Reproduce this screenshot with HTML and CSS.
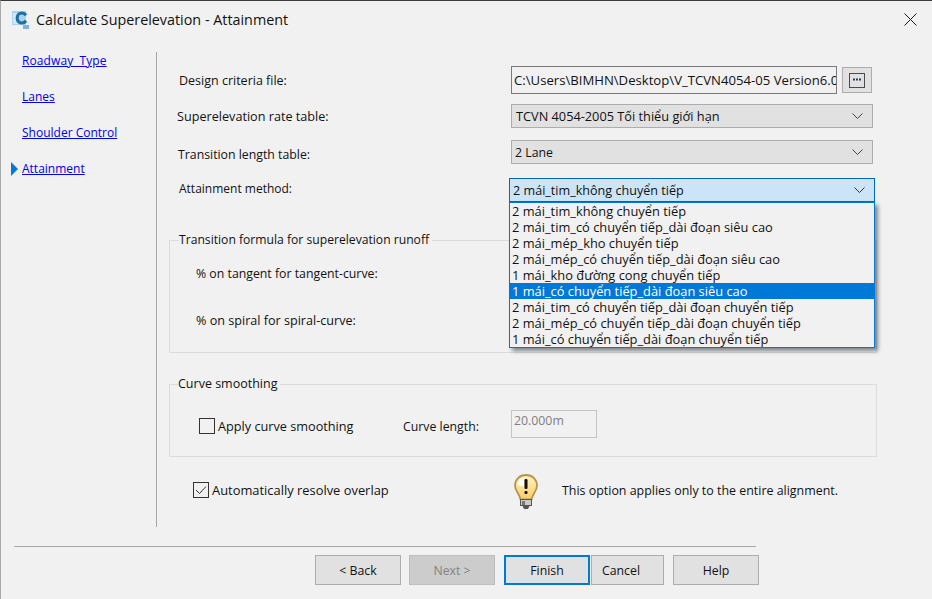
FILE: index.html
```html
<!DOCTYPE html>
<html lang="vi">
<head>
<meta charset="utf-8">
<title>Calculate Superelevation - Attainment</title>
<link rel="stylesheet" href="styles.css">
</head>
<body>
<div class="dialog">
  <header class="titlebar">
    <svg class="app-icon" width="18" height="20" viewBox="0 0 18 20">
      <rect x="0" y="1" width="14" height="14" fill="#a9d3ee"/>
      <rect x="1" y="3" width="6" height="11" fill="#cfe6f6"/>
      <path d="M14 5.200C13 3.800 11.600 3 10 3 7.200 3 5.200 5.100 5.200 8s2 5 4.800 5c1.600 0 3-.8 4-2.200" fill="none" stroke="#1d6fa5" stroke-width="3.200"/>
      <rect x="11" y="15" width="6" height="4" fill="#7fb3d6"/>
    </svg>
    <h1 class="title">Calculate Superelevation - Attainment</h1>
    <svg class="close" width="13" height="13" viewBox="0 0 13 13">
      <path d="M.5.5l12 12M12.500.5l-12 12" stroke="#1a1a1a" stroke-width="1" fill="none"/>
    </svg>
  </header>

  <main class="body">
    <nav class="nav">
      <a class="nav-link nav-link-wide" href="#">Roadway Type</a>
      <a class="nav-link" href="#">Lanes</a>
      <a class="nav-link" href="#">Shoulder Control</a>
      <a class="nav-link nav-current" href="#">Attainment</a>
    </nav>

    <section class="content">
      <div class="row row-file">
        <label class="label label-a label-design">Design criteria file:</label>
        <div class="path-input">C:\Users\BIMHN\Desktop\V_TCVN4054-05 Version6.0</div>
        <button class="browse" type="button">
          <svg width="16" height="15" viewBox="0 0 16 15">
            <rect x=".5" y=".5" width="15" height="14" fill="none" stroke="#4a4a4a"/>
            <path d="M4 6.500h2M7 6.500h2M10 6.500h2" stroke="#1c3f6e" stroke-width="2"/>
          </svg>
        </button>
      </div>
      <div class="row row-rate">
        <label class="label label-b">Superelevation rate table:</label>
        <div class="select">
          <span class="select-text select-text-wide">TCVN 4054-2005 Tối thiểu giới hạn</span>
          <svg class="chevron" width="11" height="6" viewBox="0 0 11 6"><path d="M.5.500l5 5 5-5" fill="none" stroke="#444"/></svg>
        </div>
      </div>
      <div class="row row-length">
        <label class="label label-c">Transition length table:</label>
        <div class="select">
          <span class="select-text">2 Lane</span>
          <svg class="chevron" width="11" height="6" viewBox="0 0 11 6"><path d="M.5.500l5 5 5-5" fill="none" stroke="#444"/></svg>
        </div>
      </div>
      <div class="row row-method">
        <label class="label label-a label-method">Attainment method:</label>
        <div class="select select-open">
          <span class="select-text">2 mái_tim_không chuyển tiếp</span>
          <svg class="chevron" width="11" height="6" viewBox="0 0 11 6"><path d="M.5.500l5 5 5-5" fill="none" stroke="#333"/></svg>
          <ul class="dropdown">
            <li class="option">2 mái_tim_không chuyển tiếp</li>
            <li class="option">2 mái_tim_có chuyển tiếp_dài đoạn siêu cao</li>
            <li class="option">2 mái_mép_kho chuyển tiếp</li>
            <li class="option">2 mái_mép_có chuyển tiếp_dài đoạn siêu cao</li>
            <li class="option">1 mái_kho đường cong chuyển tiếp</li>
            <li class="option option-active">1 mái_có chuyển tiếp_dài đoạn siêu cao</li>
            <li class="option">2 mái_tim_có chuyển tiếp_dài đoạn chuyển tiếp</li>
            <li class="option">2 mái_mép_có chuyển tiếp_dài đoạn chuyển tiếp</li>
            <li class="option">1 mái_có chuyển tiếp_dài đoạn chuyển tiếp</li>
          </ul>
        </div>
      </div>

      <fieldset class="group group-formula">
        <legend class="legend">Transition formula for superelevation runoff</legend>
        <p class="formula-line">% on tangent for tangent-curve:</p>
        <p class="formula-line formula-second">% on spiral for spiral-curve:</p>
      </fieldset>

      <fieldset class="group group-curve">
        <legend class="legend legend-curve">Curve smoothing</legend>
        <div class="curve-row">
          <span class="check check-empty"></span>
          <span class="check-label check-label-apply">Apply curve smoothing</span>
          <span class="curve-length">Curve length:</span>
          <div class="length-input">20.000m</div>
        </div>
      </fieldset>

      <div class="row row-overlap">
        <span class="check check-on">
          <svg width="12" height="10" viewBox="0 0 12 10"><path d="M1 5l3.500 3.500L11 1.500" fill="none" stroke="#333" stroke-width="1"/></svg>
        </span>
        <span class="check-label check-label-overlap">Automatically resolve overlap</span>
        <svg class="bulb" width="26" height="38" viewBox="0 0 26 38">
          <defs>
            <linearGradient id="glass" x1="0" y1="0" x2="0" y2="1">
              <stop offset="0" stop-color="#fff3c4"/>
              <stop offset="1" stop-color="#f9cd66"/>
            </linearGradient>
          </defs>
          <path d="M13 2C6.500 2 2 6.700 2 12.500c0 5.500 4.500 8 5.500 14h11c1-6 5.500-8.500 5.500-14C24 6.700 19.500 2 13 2z" fill="url(#glass)" stroke="#b9944a" stroke-width="1.800"/>
          <path d="M4.500 12C4.500 7.500 8 4.500 11 4.200v9.300z" fill="#fffdf4"/>
          <rect x="11.500" y="6" width="3" height="10" rx="1.300" fill="#111"/>
          <rect x="11.500" y="18" width="3" height="3" rx="1" fill="#111"/>
          <rect x="7.500" y="26.500" width="11" height="6" fill="#c9c9c9" stroke="#555"/>
          <rect x="9" y="28" width="3" height="4" fill="#777"/>
          <path d="M9.500 33h7l-1.500 3h-4z" fill="#555"/>
        </svg>
        <span class="note">This option applies only to the entire alignment.</span>
      </div>
    </section>
  </main>

  <footer class="footer">
    <div class="rule"></div>
    <div class="buttons">
      <button class="btn" type="button">&lt; Back</button>
      <button class="btn btn-disabled" type="button">Next &gt;</button>
      <button class="btn btn-default" type="button">Finish</button>
      <button class="btn btn-cancel" type="button">Cancel</button>
      <button class="btn btn-help" type="button">Help</button>
    </div>
  </footer>
</div>
</body>
</html>
```

FILE: styles.css
```css
* { box-sizing: border-box; }
html, body { margin: 0; padding: 0; }
body {
  width: 932px;
  height: 599px;
  overflow: hidden;
  font-family: "Open Sans", "Noto Sans", sans-serif;
  font-size: 12.3px;
  color: #111;
  background: #f1f1f1;
}
.dialog {
  width: 932px;
  height: 599px;
  display: flex;
  flex-direction: column;
  background: #f1f1f1;
  border-top: 1px solid #3c3c3c;
  border-left: 1px solid #a8a8a8;
}
.titlebar {
  height: 39px;
  display: flex;
  align-items: center;
  padding: 0 15px 2px 11px;
  flex: none;
}
.app-icon { flex: none; }
.title {
  flex: 1;
  margin: 0 0 0 6px;
  font-size: 14.35px;
  font-weight: 400;
  color: #111;
}
.close { flex: none; }
.body {
  flex: none;
  height: 475px;
  margin-top: 12px;
  display: flex;
}
.nav {
  width: 156px;
  flex: none;
  border-right: 1px solid #a8a8a8;
  padding: 0 0 0 21px;
  display: flex;
  flex-direction: column;
  align-items: flex-start;
  font-size: 12px;
}
.nav-link {
  height: 18px;
  line-height: 18px;
  margin-bottom: 18px;
  color: #0000ee;
  position: relative;
}
.nav-link-wide { word-spacing: 3px; letter-spacing: .1px; }
.nav-current::before {
  content: "";
  position: absolute;
  left: -11px;
  top: 2px;
  border-left: 7px solid #0a78d2;
  border-top: 7px solid transparent;
  border-bottom: 7px solid transparent;
}
.content {
  flex: 1;
  padding: 14px 0 0 12px;
  min-width: 0;
}
.row {
  display: flex;
  align-items: center;
  position: relative;
}
.label { display: block; flex: none; }
.label-a { width: 342px; padding-left: 10px; }
.label-b { width: 342px; padding-left: 8px; font-size: 12.65px; }
.label-c { width: 342px; padding: 4px 0 0 9px; }
.label-design { font-size: 12.5px; }
.row-file { height: 28px; }
.row-rate { height: 24px; margin-top: 10px; }
.row-length { height: 24px; margin-top: 12px; }
.row-method { height: 24px; margin-top: 14px; }
.label-method { width: 340px; padding-bottom: 4px; font-size: 12px; }
.path-input {
  width: 326px;
  height: 28px;
  border: 1px solid #7a7a7a;
  line-height: 26px;
  padding-left: 2px;
  background: #f1f1f1;
  overflow: hidden;
  white-space: nowrap;
  font-size: 13.15px;
}
.browse {
  width: 30px;
  height: 26px;
  margin-left: 5px;
  padding: 0;
  border: 1px solid #adadad;
  background: #e1e1e1;
  display: flex;
  align-items: center;
  justify-content: center;
}
.select {
  width: 362px;
  height: 24px;
  border: 1px solid #adadad;
  background: #e1e1e1;
  display: flex;
  align-items: center;
  justify-content: space-between;
  padding: 0 9px 0 3px;
  position: relative;
}
.select-text-wide { padding-left: 1px; font-size: 12.75px; }
.select-open {
  width: 366px;
  border: 1px solid #0067c0;
  background: #cce4f7;
  padding-left: 3px;
  padding-right: 9px;
  font-size: 12.6px;
}
.dropdown {
  position: absolute;
  left: -1px;
  top: 23px;
  width: 366px;
  height: 146px;
  margin: 0;
  padding: 0;
  list-style: none;
  background: #f1f1f1;
  border: 1px solid #0078d7;
  box-shadow: 3px 3px 4px rgba(0, 0, 0, .45);
  z-index: 2;
  font-size: 12.85px;
}
.option {
  height: 16px;
  line-height: 16px;
  padding-left: 2px;
  white-space: nowrap;
}
.option-active { background: #0078d7; color: #fff; }
.group {
  margin: 0;
  padding: 0;
  width: 708px;
  border: 1px solid #dcdcdc;
  min-width: 0;
}
.legend {
  margin-left: 9px;
  padding: 0;
  height: 16px;
  line-height: 16px;
  background: #f1f1f1;
  padding-right: 3px;
  font-size: 12.15px;
}
.legend-curve { margin-left: 8px; font-size: 12.5px; }
.group-formula { margin-top: 30px; height: 121px; }
.formula-line { margin: 0; padding-left: 26px; height: 18px; line-height: 18px; }
.group-formula .formula-line:first-of-type { margin-top: 17px; }
.formula-second { margin-top: 29px; font-size: 12.6px; }
.group-curve { margin-top: 23px; height: 81px; }
.curve-row {
  display: flex;
  align-items: center;
  height: 28px;
  margin-top: 18px;
  padding-left: 29px;
}
.check {
  width: 16px;
  height: 16px;
  flex: none;
  border: 1px solid #333;
  background: #f1f1f1;
  display: flex;
  align-items: center;
  justify-content: center;
}
.check-empty { margin-top: 4px; }
.check-label { margin-left: 3px; flex: none; }
.check-label-apply { font-size: 12.7px; padding-top: 4px; width: 136px; }
.curve-length { margin-left: 49px; flex: none; width: 108px; padding-top: 4px; }
.length-input {
  width: 86px;
  height: 28px;
  border: 1px solid #c4c4c4;
  color: #808080;
  padding: 2px 0 0 2px;
  line-height: 16px;
}
.row-overlap { height: 38px; margin-top: 16px; padding-left: 24px; }
.row-overlap .check { margin-bottom: 4px; }
.check-label-overlap { margin: 0 0 4px 3px; width: 301px; font-size: 12.9px; }
.bulb { flex: none; }
.note { margin: 0 0 4px 23px; font-size: 12.43px; }
.footer { flex: 1; display: flex; flex-direction: column; }
.rule {
  margin: 19px 0 0 13px;
  width: 742px;
  height: 1px;
  flex: none;
  background: #a8a8a8;
}
.buttons {
  display: flex;
  margin-top: 8px;
  padding-left: 314px;
}
.btn {
  width: 86px;
  height: 30px;
  padding: 0;
  margin-right: 8px;
  border: 1px solid #adadad;
  background: #e1e1e1;
  color: #111;
  font: inherit;
}
.btn-disabled { background: #cccccc; color: #838383; border-color: #bfbfbf; margin-right: 9px; }
.btn-default { border: 2px solid #0078d7; margin-right: 1px; }
.btn-cancel { width: 73px; margin-right: 9px; padding-right: 13px; }
```
